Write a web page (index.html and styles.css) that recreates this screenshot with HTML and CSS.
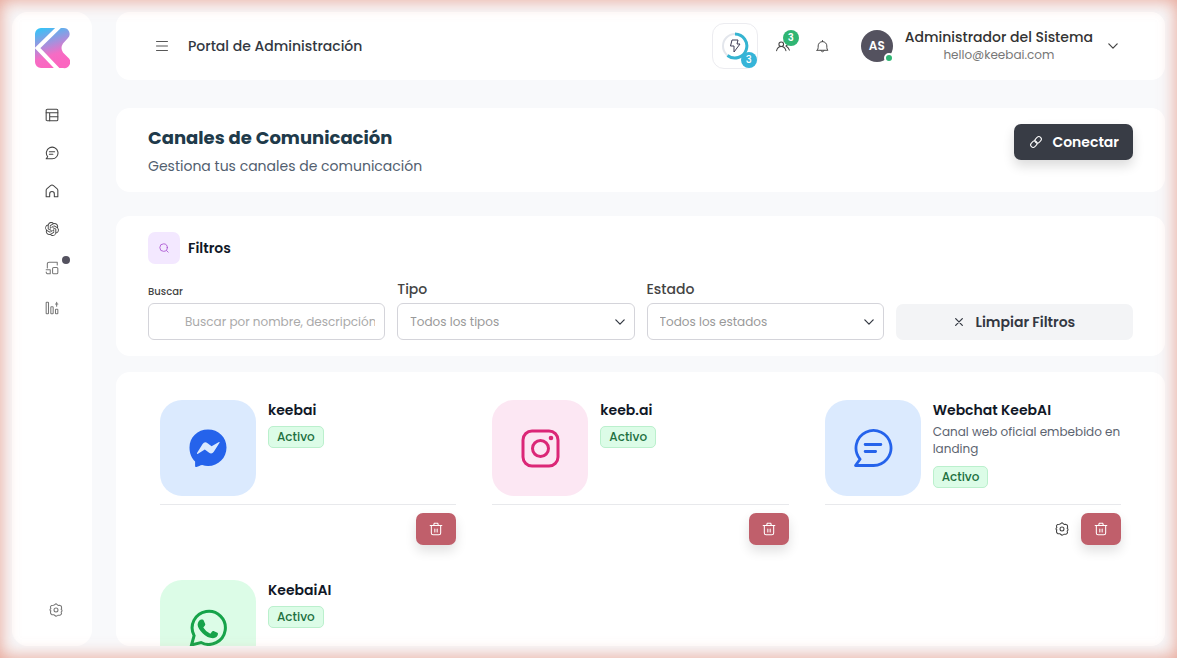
FILE: index.html
```html
<!DOCTYPE html>
<html lang="es">

<head>
    <meta charset="UTF-8">
    <meta name="viewport" content="width=device-width, initial-scale=1.0">
    <title>Canales de Comunicación</title>
    <link rel="stylesheet" href="styles.css">
</head>

<body>
    <!-- Shared icons -->
    <svg class="sprite" aria-hidden="true">
        <symbol id="i-chat" viewBox="0 0 24 24">
            <path d="M2 22l2.600-3.600A10 10 0 1 1 12 22z" />
            <path d="M7.500 10h9M7.500 14h6" />
        </symbol>
        <symbol id="i-chevron" viewBox="0 0 24 24">
            <path d="M2 7l10 10L22 7" />
        </symbol>
        <symbol id="i-gear" viewBox="0 0 24 24">
            <path d="M9.500 3.200L12 1.200l2.500 2 1.200 1 3-.2 2.500 1.600.5 3.500-.9 1.700 1.400 1.500v1.600l-1.400 1.500.7 3.200-2.400 2.400-3.400-.1-1.200.7L12 22.800l-2.500-1.800-1.200-1-3 .2-2.500-2.200-.3-3.300.8-1.200L1.800 12.600v-1.700l1.400-1.400-.8-3L4.200 4.300l3.500-.6z" />
            <circle cx="12" cy="12" r="3.400" />
        </symbol>
        <symbol id="i-trash" viewBox="0 0 24 24">
            <path d="M2 6h20M8 6l1-4h6l1 4M4 6v13a3 3 0 0 0 3 3h10a3 3 0 0 0 3-3V6M10 12v5M14 12v5" />
        </symbol>
    </svg>

    <div class="layout">
        <aside class="sidebar">
            <a href="#" class="logo" aria-label="Keebai">
                <svg width="36" height="42" viewBox="0 0 36 42">
                    <defs>
                        <linearGradient id="logo-fill" x1="0" y1="0" x2="0.300" y2="1">
                            <stop offset="0.050" stop-color="#36c3f7" />
                            <stop offset="0.480" stop-color="#a98fdc" />
                            <stop offset="0.750" stop-color="#f56cc4" />
                            <stop offset="1" stop-color="#fb66c0" />
                        </linearGradient>
                    </defs>
                    <path fill="url(#logo-fill)" d="M7 1h22a6 6 0 0 1 5 10l-5 5.500q-3 4.500 0 9l5 5a6 6 0 0 1-5 10.500H7a6 6 0 0 1-6-6V7a6 6 0 0 1 6-6z" />
                    <path fill="none" stroke="#fff" stroke-width="4" d="M26-1L3.500 21 25 43.500" />
                </svg>
            </a>
            <nav class="nav">
                <a href="#" class="nav-link" aria-label="Panel">
                    <svg class="icon" viewBox="0 0 24 24"><rect x="2" y="2" width="20" height="20" rx="2" /><path d="M2 8h20M8 8v14M8 15h14" /></svg>
                </a>
                <a href="#" class="nav-link" aria-label="Conversaciones">
                    <svg class="icon"><use href="#i-chat" /></svg>
                </a>
                <a href="#" class="nav-link" aria-label="Inicio">
                    <svg class="icon" viewBox="0 0 24 24"><path d="M2 10.500Q2 9 3.500 7.800l6-5q2.500-2 5 0l6 5Q22 9 22 10.500V22h-6v-5a4 4 0 0 0-8 0v5H2z" /></svg>
                </a>
                <a href="#" class="nav-link" aria-label="Asistentes">
                    <svg class="icon icon-solid" viewBox="0 0 24 24"><path d="M22.282 9.821a5.985 5.985 0 0 0-.516-4.910 6.046 6.046 0 0 0-6.510-2.900A6.065 6.065 0 0 0 4.981 4.182a5.985 5.985 0 0 0-3.998 2.900 6.046 6.046 0 0 0 .743 7.097 5.980 5.980 0 0 0 .511 4.911 6.051 6.051 0 0 0 6.515 2.900A5.985 5.985 0 0 0 13.260 24a6.056 6.056 0 0 0 5.772-4.206 5.989 5.989 0 0 0 3.998-2.900 6.056 6.056 0 0 0-.748-7.073zm-9.022 12.608a4.476 4.476 0 0 1-2.876-1.041l.142-.080 4.778-2.758a.795.795 0 0 0 .393-.681v-6.737l2.020 1.169a.071.071 0 0 1 .038.052v5.583a4.504 4.504 0 0 1-4.495 4.494zm-9.661-4.125a4.471 4.471 0 0 1-.535-3.014l.142.085 4.783 2.758a.771.771 0 0 0 .781 0l5.843-3.369v2.332a.080.080 0 0 1-.033.062L9.740 19.950a4.499 4.499 0 0 1-6.141-1.646zM2.341 7.896a4.485 4.485 0 0 1 2.366-1.973V11.600a.766.766 0 0 0 .388.677l5.814 3.354-2.020 1.169a.076.076 0 0 1-.071 0l-4.830-2.787A4.504 4.504 0 0 1 2.341 7.872zm16.596 3.856L13.104 8.364 15.119 7.200a.076.076 0 0 1 .071 0l4.830 2.791a4.494 4.494 0 0 1-.677 8.104v-5.677a.790.790 0 0 0-.407-.667zm2.011-3.023l-.142-.085-4.774-2.782a.776.776 0 0 0-.785 0L9.409 9.230V6.897a.066.066 0 0 1 .028-.062l4.830-2.787a4.499 4.499 0 0 1 6.680 4.660zM8.307 12.863l-2.020-1.164a.080.080 0 0 1-.038-.057V6.074a4.499 4.499 0 0 1 7.376-3.454l-.142.081L8.704 5.459a.795.795 0 0 0-.393.681zm1.098-2.365l2.602-1.500 2.607 1.500v2.999l-2.597 1.500-2.607-1.500z" /></svg>
                </a>
                <a href="#" class="nav-link nav-link-tall" aria-label="Dispositivos">
                    <svg class="icon icon-light" viewBox="0 0 24 24"><path d="M4 12V5a3 3 0 0 1 3-3h14v5M2 15h7v7H5a3 3 0 0 1-3-3" /><rect x="13" y="11" width="9" height="11" rx="2" /></svg>
                    <span class="dot"></span>
                </a>
                <a href="#" class="nav-link nav-link-tall" aria-label="Estadísticas">
                    <svg class="icon icon-light" viewBox="0 0 24 24"><rect x="2" y="2" width="4" height="20" rx="1" /><rect x="10" y="10" width="4" height="12" rx="1" /><rect x="18" y="14" width="4" height="8" rx="1" /><path d="M20 2v7M18 5h4" /></svg>
                </a>
            </nav>
            <a href="#" class="settings" aria-label="Configuración">
                <svg class="icon icon-light"><use href="#i-gear" /></svg>
            </a>
        </aside>

        <div class="main">
            <header class="panel topbar">
                <button class="plain" aria-label="Menú">
                    <svg class="icon icon-small" viewBox="0 0 24 24"><path d="M1 3h22M1 12h22M1 21h22" /></svg>
                </button>
                <span class="portal">Portal de Administración</span>
                <div class="actions">
                    <button class="plain quick" aria-label="Acciones rápidas">
                        <svg width="28" height="28" viewBox="0 0 28 28" fill="none">
                            <circle cx="14" cy="14" r="12" stroke="#e3e6ec" stroke-width="2" />
                            <path d="M14 2a12 12 0 1 1-7.500 21.500" stroke="#35b4d1" stroke-width="3" />
                            <path d="M11 8h6l-1 4h3l-6 8v-6H9.500z" stroke="#3f3d56" stroke-linejoin="round" />
                        </svg>
                        <span class="badge badge-blue">3</span>
                    </button>
                    <button class="plain people" aria-label="Usuarios">
                        <svg class="icon" viewBox="0 0 24 24"><circle cx="9" cy="9" r="4" /><path d="M1 20q2-7 8-7t8 7M14 4a4 4 0 0 1 3 8q4 2 6 7" /></svg>
                        <span class="badge badge-green">3</span>
                    </button>
                    <button class="plain" aria-label="Notificaciones">
                        <svg class="icon icon-bell" viewBox="0 0 24 24"><path d="M2 19h20q-2-2-2-5v-3a8 8 0 0 0-16 0v3q0 3-2 5zM9 20q3 4 6 0M12 1v2" /></svg>
                    </button>
                    <button class="plain profile">
                        <span class="avatar">AS<span class="online"></span></span>
                        <span class="user">
                            <span class="user-name">Administrador del Sistema</span>
                            <span class="user-mail">hello@keebai.com</span>
                        </span>
                        <svg class="icon icon-chevron"><use href="#i-chevron" /></svg>
                    </button>
                </div>
            </header>

            <section class="panel heading">
                <div>
                    <h1>Canales de Comunicación</h1>
                    <p>Gestiona tus canales de comunicación</p>
                </div>
                <button class="btn btn-dark">
                    <svg class="icon icon-link" viewBox="0 0 24 24"><g transform="rotate(-45 12 12)"><rect x="-1" y="7" width="14" height="10" rx="5" /><rect x="11" y="7" width="14" height="10" rx="5" /></g></svg>
                    Conectar
                </button>
            </section>

            <section class="panel filters">
                <div class="filters-title">
                    <span class="filters-icon">
                        <svg class="icon icon-search" viewBox="0 0 24 24"><circle cx="11" cy="11" r="9" /><path d="M18 18l4 4" /></svg>
                    </span>
                    <h2>Filtros</h2>
                </div>
                <form class="filters-grid">
                    <div class="field">
                        <label class="label-small" for="buscar">Buscar</label>
                        <input class="control control-search" type="text" id="buscar" placeholder="Buscar por nombre, descripción...">
                    </div>
                    <div class="field">
                        <label for="tipo">Tipo</label>
                        <div class="select">
                            <select class="control" id="tipo"><option>Todos los tipos</option></select>
                            <svg class="icon icon-chevron"><use href="#i-chevron" /></svg>
                        </div>
                    </div>
                    <div class="field">
                        <label for="estado">Estado</label>
                        <div class="select">
                            <select class="control" id="estado"><option>Todos los estados</option></select>
                            <svg class="icon icon-chevron"><use href="#i-chevron" /></svg>
                        </div>
                    </div>
                    <button class="btn btn-light" type="reset">
                        <svg class="icon icon-close" viewBox="0 0 24 24"><path d="M4 4l16 16M20 4L4 20" /></svg>
                        Limpiar Filtros
                    </button>
                </form>
            </section>

            <section class="panel channels">
                <article class="channel">
                    <div class="channel-info">
                        <div class="thumb thumb-blue">
                            <svg width="40" height="40" viewBox="0 0 40 40">
                                <path fill="#2563eb" d="M20 1.500c10.500 0 18.500 7.700 18.500 18S30.500 38 20 38c-2 0-4-.4-5.800-1-2 .3-3.800 1.400-5.700 2-.8.200-1.400-.3-1.400-1v-4.500C3.700 30.300 1.500 25.500 1.500 19.500 1.500 9.200 9.500 1.500 20 1.500z" />
                                <path fill="#dbeafe" d="M9 25l5.600-9q2-3 5-.8l4 3 7.400-4.200q1-.3.500.8l-5.700 9q-2 3-5 .8l-4-3-6.800 4.200q-1.400.4-1-.8z" />
                            </svg>
                        </div>
                        <div class="channel-text">
                            <h3>keebai</h3>
                            <span class="status">Activo</span>
                        </div>
                    </div>
                    <div class="channel-actions">
                        <button class="btn-delete" aria-label="Eliminar"><svg class="icon"><use href="#i-trash" /></svg></button>
                    </div>
                </article>

                <article class="channel">
                    <div class="channel-info">
                        <div class="thumb thumb-pink">
                            <svg width="40" height="40" viewBox="0 0 40 40" fill="none" stroke="#db2777" stroke-width="3">
                                <rect x="3" y="3" width="35" height="35" rx="9" />
                                <circle cx="20.500" cy="20.500" r="8" />
                                <circle cx="31" cy="10" r="2.300" fill="#db2777" stroke="none" />
                            </svg>
                        </div>
                        <div class="channel-text">
                            <h3>keeb.ai</h3>
                            <span class="status">Activo</span>
                        </div>
                    </div>
                    <div class="channel-actions">
                        <button class="btn-delete" aria-label="Eliminar"><svg class="icon"><use href="#i-trash" /></svg></button>
                    </div>
                </article>

                <article class="channel">
                    <div class="channel-info">
                        <div class="thumb thumb-blue">
                            <svg class="icon-channel"><use href="#i-chat" /></svg>
                        </div>
                        <div class="channel-text">
                            <h3>Webchat KeebAI</h3>
                            <p>Canal web oficial embebido en landing</p>
                            <span class="status">Activo</span>
                        </div>
                    </div>
                    <div class="channel-actions">
                        <button class="plain" aria-label="Configurar"><svg class="icon"><use href="#i-gear" /></svg></button>
                        <button class="btn-delete" aria-label="Eliminar"><svg class="icon"><use href="#i-trash" /></svg></button>
                    </div>
                </article>

                <article class="channel">
                    <div class="channel-info">
                        <div class="thumb thumb-green">
                            <svg width="40" height="40" viewBox="0 0 40 40">
                                <path fill="none" stroke="#16a34a" stroke-width="3" d="M3.500 37l2.600-9.400A16.600 16.600 0 1 1 13 34.500z" />
                                <path fill="#16a34a" d="M13 11.500h1.500q.8 0 1.200 1l1.500 3.600q.3.800-.3 1.500l-1.600 1.900q2.500 4.300 7 6.200l2-2.400q.5-.6 1.300-.3l3.800 1.800q.7.400.6 1.200-.7 4-5 4.200-5.700-.2-10.400-5t-5-8.500q.3-3.800 3.400-5.200z" />
                            </svg>
                        </div>
                        <div class="channel-text">
                            <h3>KeebaiAI</h3>
                            <span class="status">Activo</span>
                        </div>
                    </div>
                    <div class="channel-actions">
                        <button class="btn-delete" aria-label="Eliminar"><svg class="icon"><use href="#i-trash" /></svg></button>
                    </div>
                </article>
            </section>
        </div>
    </div>
    <div class="glow"></div>
</body>

</html>
```
FILE: styles.css
```css
* {
    margin: 0;
    padding: 0;
    box-sizing: border-box;
}

body {
    font-family: Poppins, Inter, "Open Sans", sans-serif;
    font-size: 14px;
    color: #333842;
    background-color: #f8f9fb;
}

button,
input,
select {
    font-family: inherit;
}

button {
    cursor: pointer;
}

a {
    color: inherit;
}

.sprite {
    position: absolute;
    width: 0;
    height: 0;
}

.icon {
    width: 14px;
    height: 14px;
    flex-shrink: 0;
    fill: none;
    stroke: currentColor;
    stroke-width: 1.8;
    stroke-linejoin: round;
    stroke-linecap: round;
    overflow: visible;
}

.icon-solid {
    fill: currentColor;
    stroke: none;
}

.icon-light {
    color: #777;
}

.icon-small {
    width: 12px;
    height: 12px;
}

.icon-link {
    width: 12px;
    height: 12px;
    stroke-width: 2;
}

.icon-bell {
    width: 13px;
    height: 13px;
}

.icon-chevron,
.icon-close {
    width: 10px;
    height: 10px;
    stroke-width: 3;
}

.plain {
    display: flex;
    align-items: center;
    background: none;
    border: none;
    color: #444;
}

.layout {
    display: flex;
    gap: 24px;
    height: 100vh;
    padding: 12px;
}

/* Sidebar */
.sidebar {
    display: flex;
    flex-direction: column;
    align-items: center;
    width: 80px;
    flex-shrink: 0;
    padding: 15px 0 29px;
    background-color: #fff;
    border-radius: 16px;
}

.logo,
.settings {
    display: flex;
}

.nav {
    display: flex;
    flex-direction: column;
    gap: 12px;
    margin-top: 33px;
    color: #444;
}

.nav-link {
    position: relative;
    display: flex;
    align-items: center;
    height: 26px;
}

.nav-link-tall {
    height: 28px;
}

.dot {
    position: absolute;
    top: 2px;
    left: 17px;
    width: 8px;
    height: 8px;
    border-radius: 50%;
    background-color: #54525f;
}

.settings {
    margin-top: auto;
    padding-left: 8px;
}

/* Main column */
.main {
    display: flex;
    flex-direction: column;
    flex: 1;
    min-width: 0;
}

.panel {
    padding: 16px 32px;
    background-color: #fff;
    border-radius: 14px;
    flex-shrink: 0;
}

.topbar {
    display: flex;
    align-items: center;
    height: 68px;
    padding: 0 47px 0 40px;
    margin-bottom: 28px;
}

.portal {
    margin-left: 20px;
    font-weight: 500;
}

.actions {
    display: flex;
    align-items: center;
    gap: 26px;
    margin-left: auto;
}

.quick {
    position: relative;
    justify-content: center;
    width: 46px;
    height: 46px;
    margin-right: -8px;
    border: 1px solid #ececf0;
    border-radius: 12px;
}

.people {
    position: relative;
}

.badge {
    position: absolute;
    width: 16px;
    height: 16px;
    border-radius: 50%;
    color: #fff;
    font-size: 10px;
    line-height: 16px;
    font-weight: 600;
    text-align: center;
}

.badge-blue {
    right: 0;
    bottom: 0;
    background-color: #35b4d8;
    font-weight: 500;
}

.badge-green {
    top: -9px;
    right: -9px;
    background-color: #2fb573;
}

.profile {
    gap: 12px;
    margin-left: 6px;
}

.avatar {
    position: relative;
    width: 32px;
    height: 32px;
    border-radius: 50%;
    background-color: #54525f;
    color: #fff;
    font-size: 12px;
    line-height: 32px;
    font-weight: 600;
}

.online {
    position: absolute;
    right: -1px;
    bottom: -1px;
    width: 10px;
    height: 10px;
    border: 2px solid #fff;
    border-radius: 50%;
    background-color: #2fb573;
}

.user {
    display: flex;
    flex-direction: column;
    align-items: center;
}

.user-name {
    font-size: 14px;
    line-height: 18px;
    font-weight: 500;
    color: #333;
}

.user-mail {
    font-size: 12px;
    line-height: 18px;
    color: #777;
}

.profile .icon-chevron {
    margin-left: 3px;
}

.heading {
    display: flex;
    justify-content: space-between;
    align-items: flex-start;
    height: 84px;
    margin-bottom: 24px;
}

h1 {
    font-size: 18px;
    line-height: 28px;
    color: #203a4a;
}

.heading p {
    line-height: 20px;
    margin-top: 4px;
    color: #52606f;
}

.btn {
    display: flex;
    align-items: center;
    justify-content: center;
    gap: 12px;
    height: 36px;
    padding: 0 14px;
    border: none;
    border-radius: 7px;
    font-size: 14px;
    font-weight: 600;
}

.btn-dark {
    padding-left: 16px;
    gap: 10px;
    color: #fff;
    background-color: #383c45;
    box-shadow: 0 6px 12px rgba(0, 0, 0, 0.14);
}

.btn-light {
    color: #333842;
    background-color: #f3f4f6;
}

/* Filters */
.filters {
    margin-bottom: 16px;
}

.filters-title {
    display: flex;
    align-items: center;
    gap: 8px;
}

.filters-icon {
    display: flex;
    align-items: center;
    justify-content: center;
    width: 32px;
    height: 32px;
    border-radius: 7px;
    color: #a84fd0;
    background-color: #f3e8ff;
}

.icon-search {
    width: 10px;
    height: 10px;
    stroke-width: 2;
}

h2 {
    font-size: 14px;
    font-weight: 600;
    color: #111827;
}

.filters-grid {
    display: grid;
    grid-template-columns: repeat(4, 1fr);
    gap: 12px;
    align-items: end;
    margin-top: 15px;
}

.field label {
    display: block;
    margin-bottom: 4px;
    font-size: 14px;
    line-height: 20px;
    font-weight: 500;
    color: #444;
}

.field .label-small {
    font-size: 10px;
    line-height: 14px;
}

.control {
    display: block;
    width: 100%;
    height: 37px;
    padding: 0 12px;
    border: 1px solid #d4d4da;
    border-radius: 6px;
    font-size: 12px;
    color: #999;
    background-color: #fff;
    appearance: none;
}

.control::placeholder {
    color: #aaa;
}

.control-search {
    padding: 0 9px 0 36px;
}

.select {
    position: relative;
}

.select .icon {
    position: absolute;
    top: 14px;
    right: 10px;
    pointer-events: none;
}

/* Channels */
.channels {
    display: grid;
    grid-template-columns: repeat(3, 1fr);
    gap: 11px 12px;
    align-content: start;
    flex: 1;
    min-height: 0;
    overflow: hidden;
}

.channel {
    padding: 12px;
}

.channel-info {
    display: flex;
    gap: 12px;
    padding-bottom: 8px;
    border-bottom: 1px solid #e8e9ec;
}

.thumb {
    display: flex;
    align-items: center;
    justify-content: center;
    width: 96px;
    height: 96px;
    flex-shrink: 0;
    border-radius: 22px;
}

.thumb-blue {
    background-color: #dbeafe;
}

.thumb-pink {
    background-color: #fce7f3;
}

.thumb-green {
    background-color: #dcfce7;
}

.icon-channel {
    width: 42px;
    height: 42px;
    fill: none;
    stroke: #2563eb;
    stroke-width: 1.6;
    stroke-linecap: round;
    stroke-linejoin: round;
}

h3 {
    font-size: 14px;
    line-height: 20px;
    font-weight: 600;
    color: #111827;
}

.channel-text p {
    margin-top: 3px;
    font-size: 12px;
    line-height: 17px;
    color: #5c6470;
}

.status {
    display: inline-block;
    margin-top: 6px;
    padding: 0 8px;
    border: 1px solid #bbf0cd;
    border-radius: 5px;
    font-size: 12px;
    line-height: 20px;
    font-weight: 500;
    color: #21703f;
    background-color: #dcfce7;
}

.channel-text p + .status {
    margin-top: 9px;
}

.channel-actions {
    display: flex;
    justify-content: flex-end;
    gap: 12px;
    padding-top: 8px;
}

.btn-delete {
    display: flex;
    align-items: center;
    justify-content: center;
    width: 40px;
    height: 32px;
    border: none;
    border-radius: 7px;
    color: #fff;
    background-color: #c05f6b;
    box-shadow: 0 6px 12px rgba(0, 0, 0, 0.12);
}

/* Coloured edge around the whole window */
.glow {
    position: fixed;
    inset: 0;
    pointer-events: none;
    box-shadow: inset 0 0 18px rgba(222, 120, 95, 0.7);
}
```
